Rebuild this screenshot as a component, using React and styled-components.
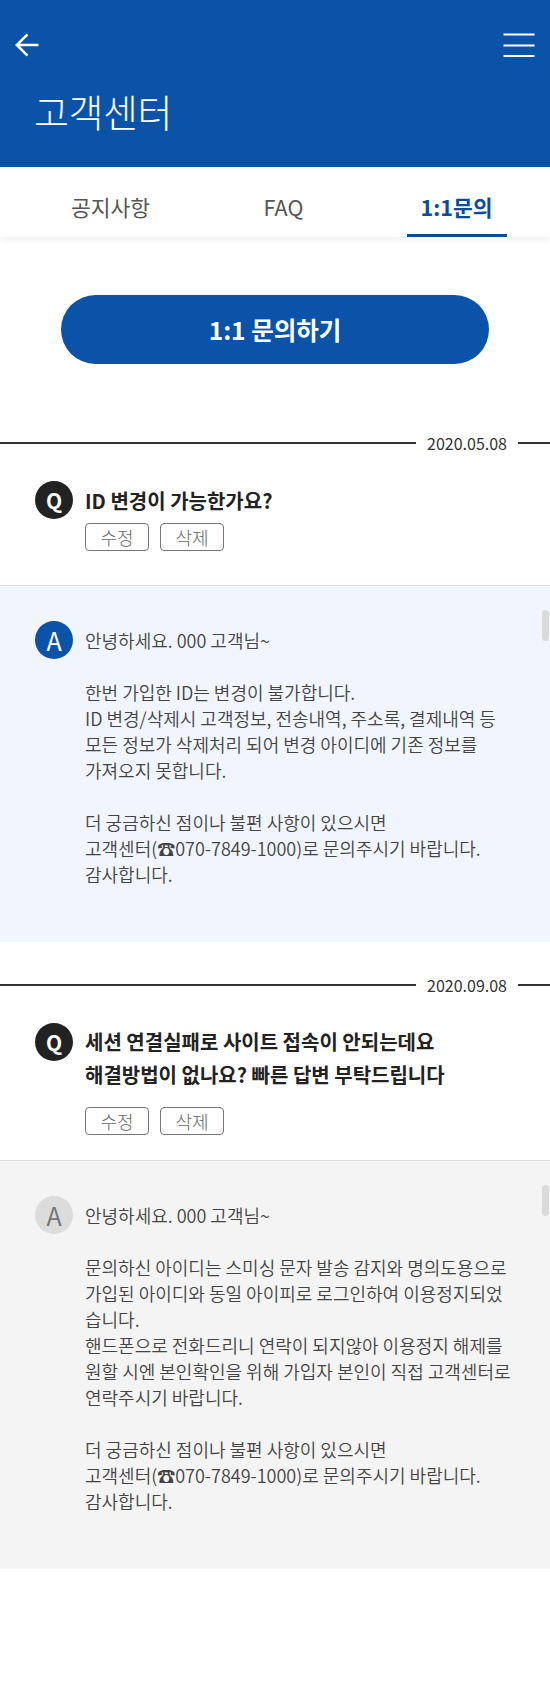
import styled, { createGlobalStyle } from "styled-components";

const BLUE = "#0a53a8";

const GlobalStyle = createGlobalStyle`
  * {
    box-sizing: border-box;
  }
  body {
    margin: 0;
    background: #fff;
    color: #222;
    font-family: "Noto Sans CJK KR", "Noto Sans", sans-serif;
  }
`;

const inquiries = [
  {
    id: 1,
    date: "2020.05.08",
    title: "ID 변경이 가능한가요?",
    answered: true,
    gap: 6,
    after: 34,
    answer: [
      "안녕하세요. 000 고객님~",
      "",
      "한번 가입한 ID는 변경이 불가합니다.",
      "ID 변경/삭제시 고객정보, 전송내역, 주소록, 결제내역 등",
      "모든 정보가 삭제처리 되어 변경 아이디에 기존 정보를",
      "가져오지 못합니다.",
      "",
      "더 궁금하신 점이나 불편 사항이 있으시면",
      "고객센터(☎070-7849-1000)로 문의주시기 바랍니다.",
      "감사합니다.",
    ],
  },
  {
    id: 2,
    date: "2020.09.08",
    title: "세션 연결실패로 사이트 접속이 안되는데요\n해결방법이 없나요? 빠른 답변 부탁드립니다",
    answered: false,
    gap: 16,
    after: 25,
    answer: [
      "안녕하세요. 000 고객님~",
      "",
      "문의하신 아이디는 스미싱 문자 발송 감지와 명의도용으로",
      "가입된 아이디와 동일 아이피로 로그인하여 이용정지되었",
      "습니다.",
      "핸드폰으로 전화드리니 연락이 되지않아 이용정지 해제를",
      "원할 시엔 본인확인을 위해 가입자 본인이 직접 고객센터로",
      "연락주시기 바랍니다.",
      "",
      "더 궁금하신 점이나 불편 사항이 있으시면",
      "고객센터(☎070-7849-1000)로 문의주시기 바랍니다.",
      "감사합니다.",
    ],
  },
];

const tabs = ["공지사항", "FAQ", "1:1문의"];

const App = () => {
  return (
    <Page>
      <GlobalStyle />
      <Header>
        <TopBar>
          <IconButton aria-label="뒤로">
            <svg width="24" height="24" viewBox="0 0 24 24" fill="none">
              <path
                d="M23.5 12H1.8 M12.5 1.3 L1.8 12 L12.5 22.7"
                stroke="#fff"
                strokeWidth="2.6"
              />
            </svg>
          </IconButton>
          <IconButton aria-label="메뉴">
            <svg width="32" height="24" viewBox="0 0 32 24" fill="none">
              <path d="M0.5 1.5H31.5 M0.5 12.5H31.5 M0.5 23H31.5" stroke="#fff" strokeWidth="1.8" />
            </svg>
          </IconButton>
        </TopBar>
        <Title>고객센터</Title>
      </Header>

      <TabBar>
        {tabs.map((tab, i) => (
          <Tab key={tab}>
            <TabLabel $active={i === 2}>{tab}</TabLabel>
            <Indicator $active={i === 2} />
          </Tab>
        ))}
      </TabBar>

      <ActionArea>
        <WriteButton>1:1 문의하기</WriteButton>
      </ActionArea>

      {inquiries.map((item) => (
        <Item key={item.id}>
          <DateDivider>
            <DateLine />
            <DateText>{item.date}</DateText>
            <DateTail />
          </DateDivider>

          <Question $after={item.after}>
            <Badge $variant="q">Q</Badge>
            <QuestionBody>
              <QuestionTitle>{item.title}</QuestionTitle>
              <EditRow $gap={item.gap}>
                <EditButton>수정</EditButton>
                <EditButton>삭제</EditButton>
              </EditRow>
            </QuestionBody>
          </Question>

          <AnswerPanel $answered={item.answered}>
            <ScrollThumb />
            <Badge $variant={item.answered ? "a" : "pending"}>A</Badge>
            <AnswerText>{item.answer.join("\n")}</AnswerText>
          </AnswerPanel>
        </Item>
      ))}
    </Page>
  );
};

const Page = styled.div`
  width: 550px;
  min-height: 1684px;
  background: #fff;
`;

const Header = styled.header`
  background: ${BLUE};
  padding-bottom: 35px;
`;

const TopBar = styled.div`
  height: 90px;
  padding: 0 15px;
  display: flex;
  align-items: center;
  justify-content: space-between;
`;

const IconButton = styled.button`
  display: flex;
  padding: 0;
  border: 0;
  background: none;
  cursor: pointer;
`;

const Title = styled.h1`
  margin: 0;
  padding-left: 34px;
  font-size: 38px;
  line-height: 42px;
  font-weight: 300;
  color: #fff;
  letter-spacing: -0.5px;
`;

const TabBar = styled.nav`
  height: 70px;
  padding: 0 7px 0 24px;
  display: grid;
  grid-template-columns: repeat(3, 1fr);
  background: #fff;
  box-shadow: 0 3px 6px rgba(0, 0, 0, 0.06);
  position: relative;
`;

const Tab = styled.div`
  display: flex;
  flex-direction: column;
  align-items: center;
  justify-content: flex-end;
  cursor: pointer;
`;

const TabLabel = styled.span`
  font-size: 21.5px;
  line-height: 30px;
  margin-bottom: 12px;
  font-weight: ${({ $active }) => ($active ? 700 : 400)};
  color: ${({ $active }) => ($active ? "#0b4c98" : "#555")};
`;

const Indicator = styled.span`
  width: 100px;
  height: 3px;
  background: ${({ $active }) => ($active ? "#0b4c98" : "transparent")};
`;

const ActionArea = styled.div`
  padding: 58px 0 36px;
  display: flex;
  justify-content: center;
`;

const WriteButton = styled.button`
  width: 428px;
  height: 69px;
  border: 0;
  border-radius: 35px;
  background: ${BLUE};
  color: #fff;
  font-family: inherit;
  font-size: 24.5px;
  font-weight: 700;
  cursor: pointer;
`;

const Item = styled.section`
  padding-top: 33px;
`;

const DateDivider = styled.div`
  height: 20px;
  display: flex;
  align-items: center;
  gap: 11px;
`;

const DateLine = styled.span`
  flex: 1;
  height: 2px;
  background: #333;
`;

const DateTail = styled.span`
  width: 32px;
  height: 2px;
  background: #333;
`;

const DateText = styled.span`
  font-size: 16px;
  line-height: 20px;
  color: #333;
`;

const Question = styled.div`
  display: flex;
  align-items: flex-start;
  gap: 12px;
  padding: 28px 20px ${({ $after }) => $after}px 35px;
`;

const Badge = styled.span`
  flex: none;
  width: 38px;
  height: 38px;
  border-radius: 50%;
  display: flex;
  align-items: center;
  justify-content: center;
  font-size: ${({ $variant }) => ($variant === "q" ? "21px" : "25px")};
  font-weight: ${({ $variant }) => ($variant === "q" ? 700 : 400)};
  background: ${({ $variant }) =>
    $variant === "q" ? "#222" : $variant === "a" ? BLUE : "#dcdcdc"};
  color: ${({ $variant }) => ($variant === "pending" ? "#777" : "#fff")};
`;

const QuestionBody = styled.div`
  display: flex;
  flex-direction: column;
`;

const QuestionTitle = styled.h2`
  margin: 2.5px 0 0;
  font-size: 20px;
  line-height: 33px;
  font-weight: 700;
  color: #222;
  white-space: pre-line;
`;

const EditRow = styled.div`
  display: flex;
  gap: 11px;
  margin-top: ${({ $gap }) => $gap}px;
`;

const EditButton = styled.button`
  width: 64px;
  height: 28px;
  padding: 0;
  border: 1px solid #777;
  border-radius: 4px;
  background: #fff;
  color: #666;
  font-family: inherit;
  font-size: 18px;
  font-weight: 300;
  line-height: 1;
  cursor: pointer;
`;

const AnswerPanel = styled.div`
  position: relative;
  display: flex;
  align-items: flex-start;
  gap: 12px;
  padding: 35px 16px 55px 35px;
  border-top: 1px solid #dedede;
  background: ${({ $answered }) => ($answered ? "#f1f6fe" : "#f4f4f4")};
`;

const ScrollThumb = styled.span`
  position: absolute;
  top: 24px;
  right: 1px;
  width: 7px;
  height: 31px;
  border-radius: 4px;
  background: #dadada;
`;

const AnswerText = styled.p`
  margin: 6px 0 0;
  font-size: 18px;
  line-height: 26px;
  font-weight: 350;
  color: #444;
  white-space: pre-line;
`;

export default App;
